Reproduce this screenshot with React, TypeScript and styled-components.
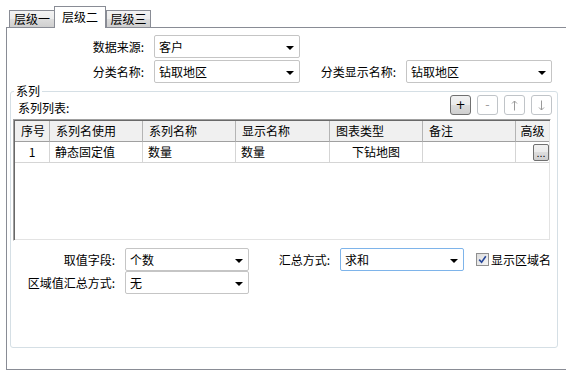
import styled, { createGlobalStyle } from "styled-components";

const GlobalStyle = createGlobalStyle`
  html, body {
    margin: 0;
    padding: 0;
    background: #fff;
  }
  body {
    width: 566px;
    height: 380px;
    overflow: hidden;
    font-family: "Noto Sans CJK SC", "Liberation Sans", sans-serif;
    font-size: 12px;
    color: #000;
  }
`;

const Page = styled.div`
  padding-left: 6px;
`;

const TabStrip = styled.div`
  display: flex;
  align-items: flex-end;
  height: 27px;
  padding-left: 3px;
`;

const Tab = styled.div<{ $active?: boolean; $w: number }>`
  position: relative;
  z-index: ${(p) => (p.$active ? 1 : 0)};
  box-sizing: border-box;
  width: ${(p) => p.$w}px;
  height: ${(p) => (p.$active ? 22 : 17)}px;
  margin-bottom: ${(p) => (p.$active ? -1 : 0)}px;
  margin-left: ${(p) => (p.$active ? -1 : 0)}px;
  padding-top: ${(p) => (p.$active ? 3 : 1)}px;
  border: 1px solid #898c95;
  border-bottom: none;
  background: ${(p) =>
    p.$active
      ? "#fff"
      : "linear-gradient(#f3f3f3, #ebebeb 50%, #dddddd 50%, #cfcfcf)"};
  text-align: center;
  line-height: 14px;
  white-space: nowrap;
`;

const Panel = styled.div`
  box-sizing: border-box;
  width: 572px;
  height: 343px;
  border: 1px solid #898c95;
  padding-top: 7px;
  background: #fff;
`;

const FormRows = styled.div<{ $gap: number }>`
  display: flex;
  flex-direction: column;
  gap: ${(p) => p.$gap}px;
`;

const FormRow = styled.div`
  display: flex;
  align-items: center;
`;

const Label = styled.div<{ $w: number }>`
  box-sizing: border-box;
  width: ${(p) => p.$w}px;
  padding-right: 10px;
  text-align: right;
  white-space: nowrap;
  line-height: 14px;
`;

const Combo = styled.div<{ $w: number; $focused?: boolean }>`
  box-sizing: border-box;
  display: flex;
  align-items: center;
  width: ${(p) => p.$w}px;
  height: 23px;
  padding: 0 5px 0 4px;
  border: 1px solid ${(p) => (p.$focused ? "#7eb4ea" : "#c5c5c5")};
  border-radius: 2px;
  background: #fff;
  line-height: 14px;
`;

const ComboArrow = styled.span`
  margin-left: auto;
  margin-top: 2px;
  width: 0;
  height: 0;
  border-left: 4px solid transparent;
  border-right: 4px solid transparent;
  border-top: 4px solid #000;
`;

const GroupBox = styled.div`
  position: relative;
  box-sizing: border-box;
  width: 548px;
  height: 257px;
  margin: 8px 0 0 3px;
  border: 1px solid #d5dfe5;
  border-radius: 3px;
`;

const Legend = styled.span`
  position: absolute;
  top: -8px;
  left: 3px;
  padding: 0 2px;
  background: #fff;
  line-height: 14px;
`;

const Toolbar = styled.div`
  display: flex;
  align-items: flex-end;
  height: 20px;
  padding: 3px 5px 0 7px;
`;

const ToolLabel = styled.span`
  line-height: 14px;
  margin-right: auto;
`;

const ToolButtons = styled.div`
  display: flex;
  gap: 6px;
`;

const ToolButton = styled.div<{ $enabled?: boolean }>`
  box-sizing: border-box;
  display: flex;
  align-items: center;
  justify-content: center;
  width: 21px;
  height: 20px;
  border: 1px solid ${(p) => (p.$enabled ? "#707070" : "#c0c4c8")};
  border-radius: 3px;
  background: ${(p) =>
    p.$enabled ? "linear-gradient(#f2f2f2, #ebebeb 50%, #dddddd 50%, #cfcfcf)" : "#fff"};
  color: ${(p) => (p.$enabled ? "#000" : "#a0a0a0")};
  font-family: "DejaVu Sans", sans-serif;
  font-size: 12px;
  line-height: 14px;
`;

const Table = styled.div`
  box-sizing: border-box;
  height: 122px;
  margin: 4px 6px 0 2px;
  padding: 1px;
  border: 1px solid;
  border-color: #a0a0a0 #fff #fff #a0a0a0;
  box-shadow: inset 1px 1px 0 #696969, inset -1px -1px 0 #e3e3e3;
`;

const TableRow = styled.div`
  display: grid;
  grid-template-columns: 35px 93px 93px 94px 93px 93px 1fr;
`;

const HeaderCell = styled.div<{ $center?: boolean }>`
  box-sizing: border-box;
  height: 21px;
  padding: 0 6px;
  background: #f0f0f0;
  border-right: 1px solid #b4b4b4;
  border-bottom: 1px solid #a0a0a0;
  line-height: 20px;
  text-align: ${(p) => (p.$center ? "center" : "left")};
  white-space: nowrap;
  &:last-child {
    border-right: none;
    padding: 0;
  }
`;

const DataCell = styled.div<{ $center?: boolean }>`
  box-sizing: border-box;
  height: 21px;
  padding: 0 5px;
  border-right: 1px solid #d5d5d5;
  border-bottom: 1px solid #d5d5d5;
  line-height: 20px;
  text-align: ${(p) => (p.$center ? "center" : "left")};
  white-space: nowrap;
`;

const ButtonCell = styled.div`
  box-sizing: border-box;
  display: flex;
  align-items: center;
  justify-content: flex-end;
  height: 21px;
  border-bottom: 1px solid #d5d5d5;
`;

const EllipsisButton = styled.div`
  box-sizing: border-box;
  width: 16px;
  height: 17px;
  border: 1px solid #707070;
  border-radius: 2px;
  background: linear-gradient(#f2f2f2, #ebebeb 50%, #dddddd 50%, #cfcfcf);
  font-family: "Liberation Sans", sans-serif;
  font-size: 11px;
  line-height: 17px;
  text-align: center;
`;

const BottomForm = styled(FormRows)`
  margin-top: 7px;
`;

const CheckWrap = styled.label`
  display: flex;
  align-items: center;
  gap: 2px;
  margin-left: 12px;
  line-height: 14px;
`;

const CheckBox = styled.span`
  box-sizing: border-box;
  display: flex;
  align-items: center;
  justify-content: center;
  width: 13px;
  height: 13px;
  border: 1px solid #8f8f8f;
  background: linear-gradient(135deg, #dcdcdc, #f6f6f6);
`;

const ArrowIcon = ({ down }: { down?: boolean }) => (
  <svg width="7" height="11" viewBox="0 0 7 11" style={{ transform: down ? "scaleY(-1)" : undefined }}>
    <path d="M3.5 1 V10.5 M1 3.5 L3.5 1 L6 3.5" fill="none" stroke="#9a9a9a" strokeWidth="1" />
  </svg>
);

const columns = [
  { title: "序号", center: true },
  { title: "系列名使用" },
  { title: "系列名称" },
  { title: "显示名称" },
  { title: "图表类型" },
  { title: "备注" },
  { title: "高级", center: true },
];

const rows = [{ no: "1", use: "静态固定值", name: "数量", display: "数量", type: "下钻地图", note: "" }];

const Select = ({ w, value, focused }: { w: number; value: string; focused?: boolean }) => (
  <Combo $w={w} $focused={focused}>
    <span>{value}</span>
    <ComboArrow />
  </Combo>
);

const App = () => {
  return (
    <Page>
      <GlobalStyle />
      <TabStrip>
        <Tab $w={46}>层级一</Tab>
        <Tab $w={52} $active>
          层级二
        </Tab>
        <Tab $w={45}>层级三</Tab>
      </TabStrip>
      <Panel>
        <FormRows $gap={2}>
          <FormRow>
            <Label $w={147}>数据来源:</Label>
            <Select w={146} value="客户" />
          </FormRow>
          <FormRow>
            <Label $w={147}>分类名称:</Label>
            <Select w={146} value="钻取地区" />
            <Label $w={106}>分类显示名称:</Label>
            <Select w={146} value="钻取地区" />
          </FormRow>
        </FormRows>

        <GroupBox>
          <Legend>系列</Legend>
          <Toolbar>
            <ToolLabel>系列列表:</ToolLabel>
            <ToolButtons>
              <ToolButton $enabled>+</ToolButton>
              <ToolButton>-</ToolButton>
              <ToolButton>
                <ArrowIcon />
              </ToolButton>
              <ToolButton>
                <ArrowIcon down />
              </ToolButton>
            </ToolButtons>
          </Toolbar>

          <Table>
            <TableRow>
              {columns.map((c) => (
                <HeaderCell key={c.title} $center={c.center}>
                  {c.title}
                </HeaderCell>
              ))}
            </TableRow>
            {rows.map((r) => (
              <TableRow key={r.no}>
                <DataCell $center>{r.no}</DataCell>
                <DataCell>{r.use}</DataCell>
                <DataCell>{r.name}</DataCell>
                <DataCell>{r.display}</DataCell>
                <DataCell $center>{r.type}</DataCell>
                <DataCell>{r.note}</DataCell>
                <ButtonCell>
                  <EllipsisButton>...</EllipsisButton>
                </ButtonCell>
              </TableRow>
            ))}
          </Table>

          <BottomForm $gap={0}>
            <FormRow>
              <Label $w={114}>取值字段:</Label>
              <Select w={124} value="个数" />
              <Label $w={91}>汇总方式:</Label>
              <Select w={124} value="求和" focused />
              <CheckWrap>
                <CheckBox>
                  <svg width="9" height="9" viewBox="0 0 9 9">
                    <path d="M1.2 4.6 L3.6 7.2 L7.8 1.2" fill="none" stroke="#26479a" strokeWidth="1.6" />
                  </svg>
                </CheckBox>
                显示区域名
              </CheckWrap>
            </FormRow>
            <FormRow>
              <Label $w={114}>区域值汇总方式:</Label>
              <Select w={124} value="无" />
            </FormRow>
          </BottomForm>
        </GroupBox>
      </Panel>
    </Page>
  );
};

export default App;
